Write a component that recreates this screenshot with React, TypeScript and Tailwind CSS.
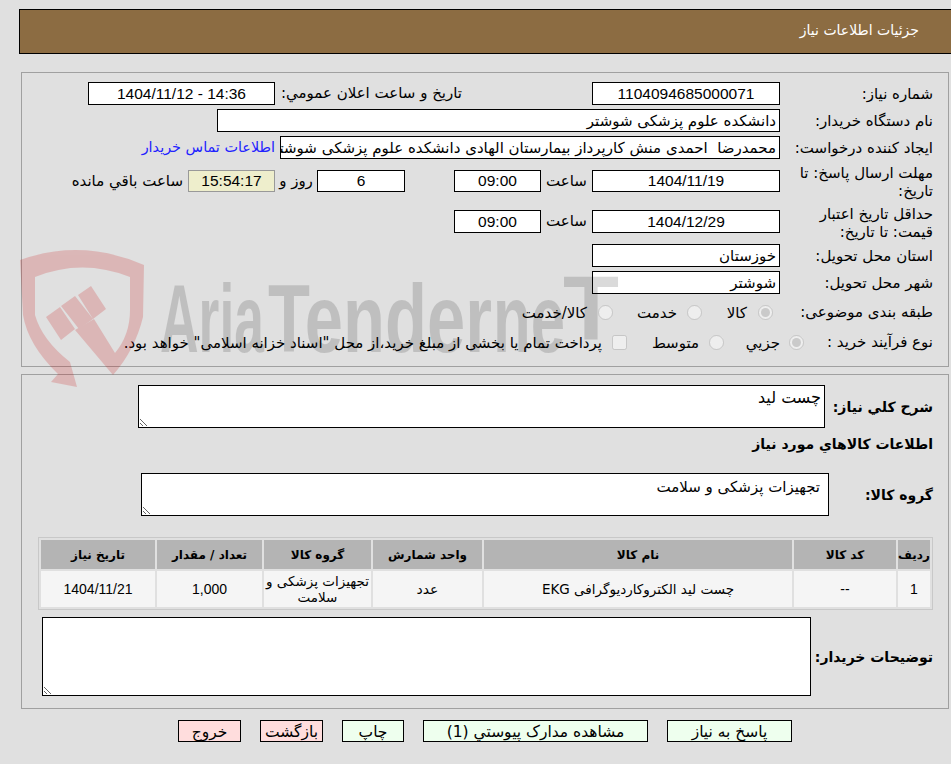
import React from "react";

const latin = "font-['Liberation_Sans','DejaVu_Sans',sans-serif] text-[15.5px]";
const cellLatin = "font-['Liberation_Sans','DejaVu_Sans',sans-serif] text-[14px] pt-[1px]";
const box = "h-full border border-black bg-white outline-none";

function Label({ children, w = "w-[153px]", cls = "" }: { children: React.ReactNode; w?: string; cls?: string }) {
  return <div className={`${w} shrink-0 leading-[18px] ${cls}`}>{children}</div>;
}

function Row({ children, cls }: { children: React.ReactNode; cls: string }) {
  return <div className={`flex items-center ${cls}`}>{children}</div>;
}

// translucent logo, it lies over the page and its fields
function Watermark() {
  return (
    <div dir="ltr" className="absolute left-0 top-0 pointer-events-none">
      <svg width="700" height="400" viewBox="0 0 700 400">
        <g fill="#c80000" opacity="0.18">
          <path d="M20 260Q82 238 144 265L143 317Q135 350 113 375L75 330L94 319L115 353Q130 335 130 310L130 277Q82 258 35 277L35 315Q42 340 70 362L77 387L51 382L58 374Q28 345 23 315Z" />
          <path d="M46 317L60 307L75 329L61 340ZM61 306L75 296L93 319L79 329ZM78 295L91 286L106 309L93 319Z" />
        </g>
        <g fontFamily="'Liberation Sans', sans-serif" fontWeight="700" fontSize="96" fill="#000" opacity="0.14">
          <text x="160" y="352" textLength="104" lengthAdjust="spacingAndGlyphs">Aria</text>
          <text x="268" y="352" textLength="224" lengthAdjust="spacingAndGlyphs">Tender</text>
          <text x="493" y="352" textLength="72" lengthAdjust="spacingAndGlyphs">ne</text>
          <text x="563" y="340" fontSize="90" textLength="56" lengthAdjust="spacingAndGlyphs">T</text>
        </g>
      </svg>
    </div>
  );
}

const head = ["ردیف", "کد کالا", "نام کالا", "واحد شمارش", "گروه کالا", "تعداد / مقدار", "تاریخ نیاز"];
const cell = "flex items-center justify-center bg-[#f5f5f5]";

export default function App() {
  return (
    <div dir="rtl" className="relative h-[764px] w-[951px] overflow-hidden bg-[#e0e0e0] pt-[9px] text-black font-['DejaVu_Sans',sans-serif] text-[15px]">
      <div>
        {/* Header */}
        <div className="ml-[19px] mr-[-10px] flex h-[45px] items-center border border-black bg-[#8c6c42] pr-[41px] pb-[2px] text-[14px] text-white">
          جزئیات اطلاعات نیاز
        </div>

        {/* Details */}
        <div className="ml-[21px] mr-[2px] mt-[18px] h-[295px] border border-[#a0a0a0] pr-[15px] pt-[9px]">
          <Row cls="h-[23px]">
            <Label>شماره نیاز:</Label>
            <input readOnly value="1104094685000071" className={`${box} ${latin} w-[188px] text-center`} />
            <div className="w-[317px] shrink-0 pr-[130px]">تاریخ و ساعت اعلان عمومي:</div>
            <input readOnly value="14:36 - 1404/11/12" className={`${box} ${latin} w-[187px] text-center`} />
          </Row>
          <Row cls="mt-[4px] h-[23px]">
            <Label>نام دستگاه خریدار:</Label>
            <input readOnly value="دانشکده علوم پزشکی شوشتر" className={`${box} w-[563px] pr-[3px]`} />
          </Row>
          <Row cls="mt-[4px] h-[23px]">
            <Label>ایجاد کننده درخواست:</Label>
            <input readOnly value="محمدرضا  احمدی منش کارپرداز بیمارستان الهادی دانشکده علوم پزشکی شوشتر" className={`${box} w-[500px] pr-[3px]`} />
            <a className="mr-[5px] text-[14.4px] text-[#2222ff]">اطلاعات تماس خریدار</a>
          </Row>
          <Row cls="mt-[11px] h-[22px] !items-start">
            <Label cls="-mt-[6px]">مهلت ارسال پاسخ: تا تاریخ:</Label>
            <input readOnly value="1404/11/19" className={`${box} ${latin} w-[188px] text-center`} />
            <div className="w-[51px] shrink-0 text-center leading-[22px]">ساعت</div>
            <input readOnly value="09:00" className={`${box} ${latin} w-[87px] text-center`} />
            <div className="w-[49px] shrink-0" />
            <input readOnly value="6" className={`${box} ${latin} w-[88px] text-center`} />
            <div className="w-[42px] shrink-0 text-center leading-[22px]">روز و</div>
            <input readOnly value="15:54:17" className={`h-full border border-[#999] bg-[#eeeecc] outline-none ${latin} w-[87px] text-center`} />
            <div className="mr-[5px] leading-[22px]">ساعت باقي مانده</div>
          </Row>
          <Row cls="mt-[18px] h-[23px] !items-start">
            <Label cls="-mt-[5px]">حداقل تاریخ اعتبار قیمت: تا تاریخ:</Label>
            <input readOnly value="1404/12/29" className={`${box} ${latin} w-[188px] text-center`} />
            <div className="w-[51px] shrink-0 text-center leading-[23px]">ساعت</div>
            <input readOnly value="09:00" className={`${box} ${latin} w-[87px] text-center`} />
          </Row>
          <Row cls="mt-[11px] h-[23px]">
            <Label>استان محل تحویل:</Label>
            <input readOnly value="خوزستان" className={`${box} w-[188px] pr-[3px]`} />
          </Row>
          <Row cls="mt-[4px] h-[23px]">
            <Label>شهر محل تحویل:</Label>
            <input readOnly value="شوشتر" className={`${box} w-[188px] pr-[3px]`} />
          </Row>
          <Row cls="mt-[8px] h-[20px]">
            <Label>طبقه بندی موضوعی:</Label>
            <input type="radio" disabled defaultChecked name="kind" className="mr-[7px] h-[15px] w-[15px] shrink-0" />
            <span className="mr-[11px] w-[45px] shrink-0 pt-[3px]">کالا</span>
            <input type="radio" disabled name="kind" className="h-[15px] w-[15px] shrink-0" />
            <span className="mr-[10px] w-[64px] shrink-0 pt-[3px]">خدمت</span>
            <input type="radio" disabled name="kind" className="h-[15px] w-[15px] shrink-0" />
            <span className="mr-[11px] pt-[3px]">کالا/خدمت</span>
          </Row>
          <Row cls="mt-[10px] h-[20px]">
            <Label w="w-[129px]">نوع فرآیند خرید :</Label>
            <input type="radio" disabled defaultChecked name="proc" className="h-[15px] w-[15px] shrink-0" />
            <span className="mr-[9px] w-[56px] shrink-0 pt-[3px]">جزيي</span>
            <input type="radio" disabled name="proc" className="h-[15px] w-[15px] shrink-0" />
            <span className="mr-[10px] w-[72px] shrink-0 pt-[3px]">متوسط</span>
            <input type="checkbox" disabled className="h-[15px] w-[15px] shrink-0" />
            <span className="mr-[10px] whitespace-nowrap pt-[3px]">پرداخت تمام یا بخشی از مبلغ خرید،از محل "اسناد خزانه اسلامی" خواهد بود.</span>
          </Row>
        </div>

        {/* Goods */}
        <div className="ml-[21px] mr-[2px] mt-[7px] h-[335px] border border-[#a0a0a0] pr-[15px] pt-[10px] text-[14px]">
          <Row cls="h-[43px]">
            <Label w="w-[108px]" cls="font-bold">شرح کلي نياز:</Label>
            <textarea readOnly defaultValue="چست لید" className={`${box} w-[687px] pr-[3px] text-[16px]`} />
          </Row>
          <div className="mt-[7px] h-[18px] font-bold leading-[18px]">اطلاعات كالاهاي مورد نياز</div>
          <Row cls="mt-[20px] h-[43px]">
            <Label w="w-[104px]" cls="font-bold">گروه کالا:</Label>
            <textarea readOnly defaultValue="تجهیزات پزشکی و سلامت" className={`${box} w-[688px] pr-[8px] pt-[2px] text-[15px]`} />
          </Row>
          <div className="mt-[21px] grid h-[73px] w-[895px] grid-cols-[32px_102px_308px_109px_107px_105px_114px] grid-rows-[29px_36px] gap-[2px] border border-[#c8c8c8] p-[2px] text-center">
            {head.map((h) => (
              <div key={h} className="flex items-center justify-center bg-[#b4b4b4] text-[12px] font-bold">{h}</div>
            ))}
            <div className={`${cell} ${cellLatin}`}>1</div>
            <div className={`${cell} ${cellLatin}`}>--</div>
            <div className={`${cell} text-[13.5px]`}>چست لید الکتروکاردیوگرافی EKG</div>
            <div className={cell}>عدد</div>
            <div className={`${cell} text-[13.5px] leading-[16px]`}>تجهیزات پزشکی و سلامت</div>
            <div className={`${cell} ${cellLatin}`}>1,000</div>
            <div className={`${cell} ${cellLatin}`}>1404/11/21</div>
          </div>
          <Row cls="mt-[7px] h-[79px]">
            <Label w="w-[122px]" cls="font-bold">توضیحات خریدار:</Label>
            <textarea readOnly className={`${box} w-[769px]`} />
          </Row>
        </div>

        {/* Actions */}
        <div className="mr-[159px] mt-[11px] flex h-[22px] gap-[19px] text-[15.5px]">
          <button className="h-full w-[125px] border border-black bg-[#eeffee]">پاسخ به نیاز</button>
          <button className="h-full w-[225px] border border-black bg-[#eeffee]">مشاهده مدارک پیوستي (1)</button>
          <button className="h-full w-[62px] border border-black bg-[#eeffee]">چاپ</button>
          <button className="h-full w-[63px] border border-black bg-[#ffdddd]">بازگشت</button>
          <button className="h-full w-[63px] border border-black bg-[#ffdddd]">خروج</button>
        </div>
      </div>
      <Watermark />
    </div>
  );
}
